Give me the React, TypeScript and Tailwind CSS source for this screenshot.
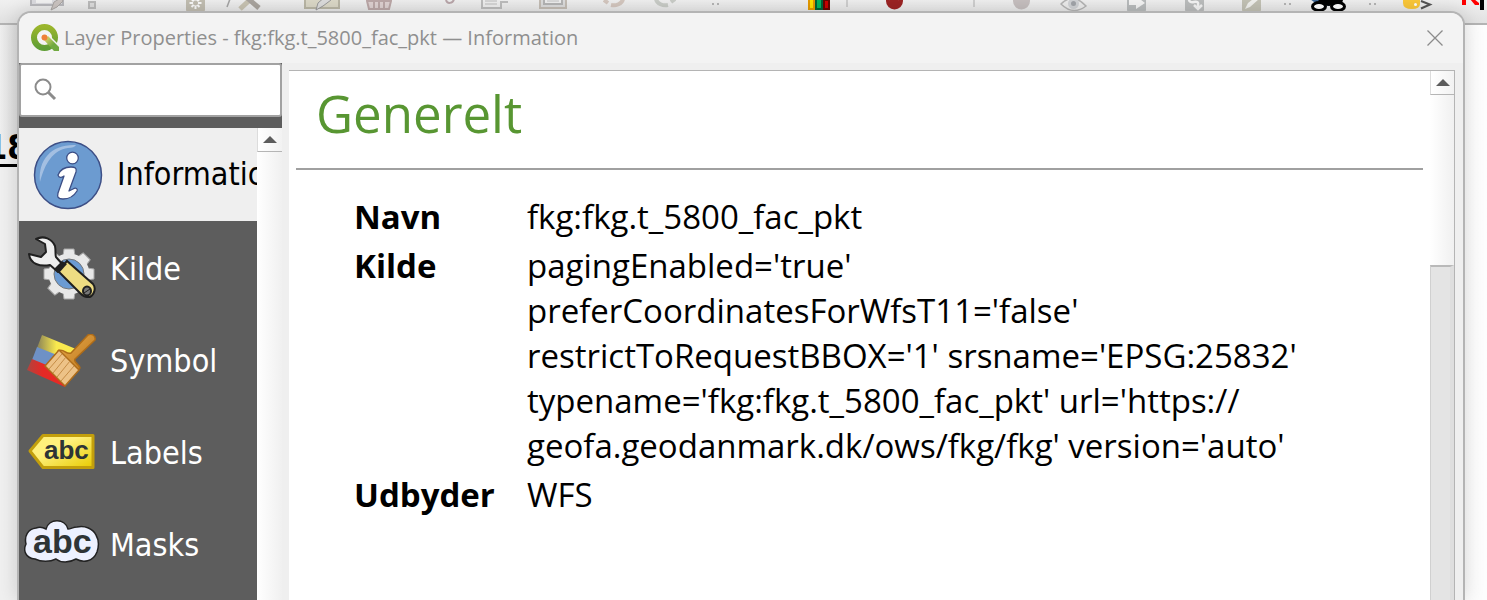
import React from "react";

type IconProps = { className?: string; w: number; children: React.ReactNode };

function ToolIcon({ className = "", w, children }: IconProps) {
  return (
    <svg className={`h-3 shrink-0 ${className}`} width={w} height={12} viewBox={`0 0 ${w} 12`} aria-hidden="true">
      {children}
    </svg>
  );
}

function Dots({ className = "" }: { className?: string }) {
  return (
    <ToolIcon w={8} className={className}>
      <path d="M0 3h2v2H0zM5 3h2v2H5z" fill="#b5b5b5" />
    </ToolIcon>
  );
}

function Toolbar() {
  return (
    <div className="flex h-[25px] items-start overflow-hidden border-b-2 border-[#b4b4b4] bg-linear-to-b from-[#f0f0f0] to-[#e2e2e2]">
      <ToolIcon w={34} className="ml-[30px]">
        <path d="M1-3v8h32v-8" fill="#dcdce0" stroke="#b9b9bd" strokeWidth="2" />
        <path d="M6-2h16v5H6z" fill="#f3f3f3" />
        <path d="M21 10l3-8 7-4 2 3-6 6z" fill="#ccc5c2" stroke="#aaa6a3" />
      </ToolIcon>
      <ToolIcon w={8} className="ml-6">
        <rect x="1" y="2" width="6" height="6" fill="#ddd" stroke="#bbb" strokeWidth="2" />
      </ToolIcon>
      <ToolIcon w={20} className="ml-[90px]">
        <rect x="0" y="-8" width="19" height="20" rx="2" fill="#c2beb2" />
        <path d="M9.500-3v12M3.500 3h12M5.500-1l8 8M13.500-1l-8 8" stroke="#fafafa" strokeWidth="2" />
        <circle cx="9.500" cy="3" r="2.500" fill="#c2beb2" />
      </ToolIcon>
      <ToolIcon w={36} className="ml-5">
        <path d="M4-1L1 7" stroke="#a5a5a5" strokeWidth="1.500" />
        <path d="M27-3L14 9" stroke="#c9c4b3" strokeWidth="5" />
        <path d="M19-4l14 12" stroke="#aaa59f" strokeWidth="5" />
      </ToolIcon>
      <ToolIcon w={36} className="ml-[42px]">
        <path d="M1-3V8h34V-3" fill="#dcd9c8" stroke="#bab7a6" strokeWidth="2" />
        <path d="M12 10l2-7 8-7 5 4-8 6z" fill="#ddd" stroke="#999" />
      </ToolIcon>
      <ToolIcon w={26} className="ml-[26px]">
        <path d="M1 1h24l-2 8H3z" fill="#dfd2d2" stroke="#bca8a8" strokeWidth="2" />
        <path d="M8 0v9M13 0v9M18 0v9" stroke="#bca8a8" strokeWidth="2" />
      </ToolIcon>
      <ToolIcon w={10} className="ml-[53px]">
        <path d="M1 0c1 4 7 4 8-1" fill="none" stroke="#b9a6aa" strokeWidth="2" />
      </ToolIcon>
      <ToolIcon w={28} className="ml-[26px]">
        <path d="M1-2v10h19V2h7" fill="#efefef" stroke="#bdbdbd" strokeWidth="2" />
        <path d="M4 1h12M4 4h12" stroke="#bdbdbd" />
      </ToolIcon>
      <ToolIcon w={28} className="ml-[30px]">
        <path d="M1-2V8h26V-2" fill="#ddd" stroke="#c4bdb5" strokeWidth="2" />
        <path d="M5-2v6h18v-6" fill="#efefef" stroke="#b5b5b5" strokeWidth="2" />
        <path d="M8 1h12" stroke="#c4c4c4" />
      </ToolIcon>
      <ToolIcon w={22} className="ml-9">
        <path d="M1 0l4 3M8 5c5 1 11-1 12-6" fill="none" stroke="#d4c7bf" strokeWidth="4" />
      </ToolIcon>
      <ToolIcon w={22} className="ml-[29px]">
        <path d="M2-1c1 5 7 7 12 6M17 2l4-3" fill="none" stroke="#c9ccc7" strokeWidth="4" />
      </ToolIcon>
      <Dots className="ml-9" />
      <ToolIcon w={22} className="ml-[88px]">
        <path d="M0-1h7v11H0z" fill="#e59a00" />
        <path d="M2-1h3v9H2z" fill="#ffe100" />
        <path d="M7-1h8v11H7z" fill="#006138" />
        <path d="M9-1h4v9H9z" fill="#00b560" />
        <path d="M15 0h7v10h-7z" fill="#650500" />
        <path d="M17 1h3v7h-3z" fill="#c00" />
      </ToolIcon>
      <ToolIcon w={3} className="ml-4">
        <path d="M0 0h2v7H0z" fill="#cfcfcf" />
      </ToolIcon>
      <ToolIcon w={17} className="ml-[37px]">
        <circle cx="8.500" cy="1" r="8.500" fill="#9c2424" />
        <path d="M3 0q5-4 10 0" stroke="#bd5555" fill="none" />
      </ToolIcon>
      <ToolIcon w={3} className="ml-[70px]">
        <path d="M0 0h2v7H0z" fill="#cfcfcf" />
      </ToolIcon>
      <ToolIcon w={17} className="ml-[37px]">
        <circle cx="8.500" cy="1" r="8.500" fill="#c6bfbf" />
      </ToolIcon>
      <ToolIcon w={28} className="ml-[30px]">
        <path d="M1 4q12-12 25 2-13 10-25-2z" fill="#ededed" stroke="#b5b5b5" strokeWidth="1.500" />
        <circle cx="13.500" cy="3.500" r="5.500" fill="#d1d3d6" />
        <circle cx="13.500" cy="3.500" r="2.500" fill="#a2a5aa" />
      </ToolIcon>
      <ToolIcon w={20} className="ml-[39px]">
        <rect x="0" y="-8" width="19" height="20" rx="2" fill="#b9bcbd" />
        <path d="M2 0h7v-4l9 7-9 6V5H2z" fill="#f5f5f5" />
      </ToolIcon>
      <ToolIcon w={20} className="ml-[38px]">
        <rect x="0" y="-8" width="19" height="20" rx="2" fill="#bbbdbd" />
        <path d="M4-1q0 4 5 3 5-1 4 3v3M9 5l4 4 4-4" fill="none" stroke="#f5f5f5" strokeWidth="2.500" />
      </ToolIcon>
      <ToolIcon w={20} className="ml-[37px]">
        <rect x="0" y="-8" width="19" height="20" rx="2" fill="#c3c2b5" />
        <path d="M3 9l3-6 9-7 2 3-9 8z" fill="#f2f2ef" />
      </ToolIcon>
      <Dots className="ml-[22px]" />
      <ToolIcon w={38} className="ml-[18px]">
        <path d="M0-1h10l10 7-12-1z" fill="#426b98" />
        <path d="M8 0h25l-2 6-7-1-5 1-6-1z" fill="#000" />
        <ellipse cx="9" cy="6.500" rx="6.500" ry="4" fill="#fff" stroke="#000" strokeWidth="3" />
        <ellipse cx="28" cy="6.500" rx="6.500" ry="4" fill="#fff" stroke="#000" strokeWidth="3" />
      </ToolIcon>
      <Dots className="ml-[21px]" />
      <ToolIcon w={30} className="ml-[26px]">
        <path d="M0-2h17v6q0 5-8 5-9 0-9-6z" fill="#fbc83a" />
        <circle cx="12.500" cy="4.500" r="1.500" fill="#fff" />
        <path d="M18 1l9 3.500-9 4" fill="none" stroke="#555" strokeWidth="2" />
      </ToolIcon>
      <ToolIcon w={24} className="ml-[29px]">
        <path d="M0-1h4v6H0zM8-1h4l5 4v2h-4z" fill="#f00" />
        <path d="M18 0h4v10h-4z" fill="#000" />
      </ToolIcon>
    </div>
  );
}

function QgisLogo() {
  return (
    <svg width="28" height="28" viewBox="0 0 28 28" className="shrink-0" aria-hidden="true">
      <defs>
        <linearGradient id="qring" x1="0" y1="0" x2="0" y2="1">
          <stop offset="0" stopColor="#9ab52c" />
          <stop offset="1" stopColor="#5f9e35" />
        </linearGradient>
        <linearGradient id="qtail" x1="0" y1="0" x2="1" y2="1">
          <stop offset="0" stopColor="#f1dc72" />
          <stop offset=".6" stopColor="#71aa40" />
        </linearGradient>
      </defs>
      <circle cx="13.500" cy="13.500" r="10.500" fill="none" stroke="url(#qring)" strokeWidth="6" />
      <path d="M17 13h3l8 8v2l-12-9z" fill="#f3f3f3" />
      <path d="M13 16l4-4 11 11v4h-5z" fill="url(#qtail)" />
      <circle cx="13.500" cy="13.500" r="3" fill="#ee8038" />
    </svg>
  );
}

function InfoIcon() {
  return (
    <svg width="70" height="70" viewBox="0 0 70 70" aria-hidden="true">
      <circle cx="35" cy="35" r="33.500" fill="#6c9bd0" stroke="#3d4f86" strokeWidth="1.500" />
      <path d="M7 42C5 19 19 4 43 5c-1 2-4 3-8 3C20 10 12 23 7 42z" fill="#a3bfe2" />
      <circle cx="39.500" cy="18" r="5.800" fill="#fff" stroke="#3d4f86" strokeWidth="1.300" />
      <path
        d="M25 35c1 3 3 3 6 1l-6 17c-1 4 0 6 5 6 6 0 11-3 14-8 1-2-1-4-4-2l-4 2 7-19c1-4-1-5-5-5-6 0-11 3-13 8z"
        fill="#fff"
        stroke="#3d4f86"
        strokeWidth="1.300"
        strokeLinejoin="round"
      />
    </svg>
  );
}

const teeth = [0, 45, 90, 135, 180, 225, 270, 315];

function SourceIcon() {
  return (
    <svg width="70" height="66" viewBox="0 0 70 66" aria-hidden="true">
      <g fill="#e8e8e8" stroke="#a7a7a7">
        {teeth.map((a) => (
          <path key={a} d="M36 20l1-7h10l1 7z" transform={`rotate(${a} 42 38)`} />
        ))}
      </g>
      <circle cx="42" cy="38" r="20.500" fill="#e8e8e8" />
      <circle cx="42" cy="38" r="15" fill="#6b9bd3" stroke="#777" />
      <path
        d="M9 3c8-4 16 0 19 7 1 5 0 8 1 11l8 9-6 6-8-7C13 31 3 28 2 18l12 3 5-5-1-8z"
        fill="#eee"
        stroke="#202020"
        strokeWidth="2"
        strokeLinejoin="round"
      />
      <path d="M31 35l9-10 26 23c4 5 0 14-6 13-3 0-5-2-7-4z" fill="#eedc82" stroke="#202020" strokeWidth="2" />
      <path d="M27 33l8-8 5 3-8 9z" fill="#202020" />
      <ellipse cx="60" cy="55" rx="4" ry="4.500" fill="#777" stroke="#202020" strokeWidth="2" />
      <path d="M57 57l6-4" stroke="#202020" />
    </svg>
  );
}

function SymbolIcon() {
  return (
    <svg width="70" height="54" viewBox="0 0 70 54" aria-hidden="true">
      <defs>
        <linearGradient id="yel" x1="0" x2="1">
          <stop offset="0" stopColor="#8b8356" />
          <stop offset=".5" stopColor="#f9e94e" />
        </linearGradient>
        <linearGradient id="red" x1="0" x2="1">
          <stop offset="0" stopColor="#b0443f" />
          <stop offset=".4" stopColor="#e62925" />
        </linearGradient>
        <linearGradient id="wood" x1="0" y1="0" x2="1" y2="1">
          <stop offset="0" stopColor="#e7a94c" />
          <stop offset="1" stopColor="#bd761a" />
        </linearGradient>
      </defs>
      <path d="M15 1l34 14-9 13-30-14z" fill="url(#yel)" />
      <path d="M10 13l35 14-8 13L5 26z" fill="#6e91c6" />
      <path d="M5 25l34 14-1 14L0 36z" fill="url(#red)" />
      <path
        d="M61 1c4-2 8 1 7 5L48 25c-2 3 4 5 5 9l-4 4-18-21c6-3 8 4 13 2z"
        fill="url(#wood)"
        stroke="#ae6c19"
        strokeWidth="1.500"
        strokeLinejoin="round"
      />
      <path d="M18 32l14-16 20 20-14 16z" fill="#edc287" stroke="#ae6c19" strokeWidth="1.500" />
      <path d="M22 35l13-15M26 39l13-16M30 43l13-16M34 47l13-15" stroke="#c58c46" />
    </svg>
  );
}

function LabelIcon() {
  return (
    <svg width="68" height="38" viewBox="0 0 68 38" aria-hidden="true">
      <defs>
        <linearGradient id="tag" x1="0" y1="0" x2="1" y2="1">
          <stop offset=".4" stopColor="#fff07c" />
          <stop offset="1" stopColor="#e8cb00" />
        </linearGradient>
      </defs>
      <path d="M2 17L15 1.500h50v32H15z" fill="url(#tag)" stroke="#c39f0c" strokeWidth="3" strokeLinejoin="round" />
      <text x="16" y="25" className="fill-[#2e3436] font-['Liberation_Sans'] text-[26px] font-bold">abc</text>
    </svg>
  );
}

function MaskIcon() {
  return (
    <svg width="76" height="50" viewBox="0 0 76 50" aria-hidden="true">
      <path
        d="M12 8q5-2 10 1c3-11 19-11 22 0 3 0 5-2 9-2 8-2 16 2 19 8 3 5 3 11 1 17-4 10-14 11-21 7-7 4-15 4-20 0-6 3-15 3-21 0C1 38-1 30 2 24 0 16 4 9 12 8z"
        fill="#edf1ff"
        stroke="#222"
        strokeWidth="1.500"
      />
      <text x="9" y="33" className="fill-[#2e3436] font-['Liberation_Sans'] text-[34px] font-bold">abc</text>
    </svg>
  );
}

const pages = [
  { name: "Kilde", icon: <SourceIcon /> },
  { name: "Symbol", icon: <SymbolIcon /> },
  { name: "Labels", icon: <LabelIcon /> },
  { name: "Masks", icon: <MaskIcon /> },
];

const rows = [
  { key: "Navn", value: "fkg:fkg.t_5800_fac_pkt" },
  {
    key: "Kilde",
    value:
      "pagingEnabled='true'\npreferCoordinatesForWfsT11='false'\nrestrictToRequestBBOX='1' srsname='EPSG:25832'\ntypename='fkg:fkg.t_5800_fac_pkt' url='https://\ngeofa.geodanmark.dk/ows/fkg/fkg' version='auto'",
  },
  { key: "Udbyder", value: "WFS" },
];

function ScrollUp() {
  return (
    <button
      aria-label="Scroll up"
      className="flex h-6 w-full shrink-0 items-center justify-center border-b border-l border-b-[#b5b5b5] border-l-[#dcdcdc] bg-linear-to-r from-white to-[#f2f2f2]"
    >
      <svg width="14" height="7" viewBox="0 0 14 7" aria-hidden="true">
        <path d="M0 7l7-7 7 7z" fill="#5c5c5c" />
      </svg>
    </button>
  );
}

function Sidebar() {
  return (
    <aside className="flex w-[263px] shrink-0 flex-col bg-[#5d5d5d]">
      <label className="flex h-[54px] shrink-0 items-center rounded-[3px] border-2 border-[#a2a2a2] bg-white pl-3">
        <svg width="24" height="24" viewBox="0 0 24 24" fill="none" stroke="#8b8b8b" strokeWidth="2" aria-hidden="true">
          <circle cx="10" cy="9" r="7.500" />
          <path d="M15 14l7 7" strokeWidth="3" />
        </svg>
        <input type="text" aria-label="Search" className="min-w-0 flex-1 px-2 text-[24px] outline-none" />
      </label>
      <div className="mt-[11px] flex min-h-0 flex-1">
        <nav className="min-w-0 flex-1 overflow-hidden font-['DejaVu_Sans_Condensed','Noto_Sans',sans-serif] text-[32px] leading-[45px]">
          <button className="mb-0.5 flex h-[93px] w-full items-center overflow-hidden bg-[#efefef] pl-[14px] text-left text-black">
            <span className="flex w-[84px] shrink-0">
              <InfoIcon />
            </span>
            <span className="shrink-0">Information</span>
          </button>
          {pages.map((p) => (
            <button key={p.name} className="flex h-[92px] w-full items-center pl-[5px] text-left text-white">
              <span className="flex w-[86px] shrink-0 justify-start">
                <span className="flex w-[76px] justify-center">{p.icon}</span>
              </span>
              <span>{p.name}</span>
            </button>
          ))}
        </nav>
        <div className="flex w-[25px] shrink-0 flex-col bg-linear-to-r from-white to-[#f0f0f0]">
          <ScrollUp />
        </div>
      </div>
    </aside>
  );
}

function Details() {
  return (
    <main className="mt-[7px] mr-2 ml-[7px] flex min-w-0 flex-1 border-t border-r border-[#b4b4b4] bg-white font-['Open_Sans',sans-serif] text-black">
      <div className="min-w-0 flex-1 pr-[7px] pl-[7px]">
        <h1 className="border-b-2 border-[#a0a0a0] pt-[7px] pb-5 pl-5 text-[51px] leading-[70px] font-normal text-[#589632]">
          Generelt
        </h1>
        <table className="mt-6 ml-[58px] text-[33px] leading-[45px]">
          <tbody>
            {rows.map((r) => (
              <tr key={r.key}>
                <th scope="row" className="w-[173px] pb-1 text-left align-top font-bold">
                  {r.key}
                </th>
                <td className="pb-1 align-top whitespace-pre">{r.value}</td>
              </tr>
            ))}
          </tbody>
        </table>
      </div>
      <div className="flex w-6 shrink-0 flex-col bg-linear-to-r from-white to-[#f0f0f0]">
        <ScrollUp />
        <div className="mt-[170px] flex-1 border-t-2 border-r-4 border-l border-t-[#b9b9b9] border-r-[#dedede] border-l-[#d0d0d0] bg-[#e4e4e4]" />
      </div>
    </main>
  );
}

export default function App() {
  return (
    <div className="relative h-screen overflow-hidden bg-linear-to-l from-[#fdfdfd] to-[#f0f0f0]">
      <div className="absolute inset-x-0 top-0">
        <Toolbar />
        <div className="h-[115px] w-[19px] bg-linear-to-r from-[#efefef] to-[#dcdcdc]" />
        <p className="absolute top-[130px] -left-[14px] border-b-[3px] border-black font-['DejaVu_Sans_Condensed','Noto_Sans',sans-serif] text-[34px] leading-[34px] font-bold text-black">
          18
        </p>
      </div>
      <section
        aria-label="Layer Properties"
        className="relative mr-[22px] ml-[17px] flex h-full flex-col pt-[11px]"
      >
        <div className="flex min-h-0 flex-1 flex-col overflow-hidden rounded-t-[14px] border-2 border-b-0 border-[#b4b4b4] bg-[#efefef] shadow-[0_0_20px_rgba(0,0,0,0.16)]">
          <header className="flex h-[50px] shrink-0 items-center bg-[#f3f3f3] pr-5 pl-3">
            <QgisLogo />
            <h2 className="ml-[5px] flex-1 font-['Open_Sans',sans-serif] text-[20px] leading-7 whitespace-nowrap text-[#8f8f8f]">
              Layer Properties - fkg:fkg.t_5800_fac_pkt — Information
            </h2>
            <button aria-label="Close" className="flex">
              <svg width="16" height="16" viewBox="0 0 16 16" stroke="#8b8b8b" strokeWidth="1.300" aria-hidden="true">
                <path d="M.5.500l15 15M15.500.500l-15 15" />
              </svg>
            </button>
          </header>
          <div className="flex min-h-0 flex-1">
            <Sidebar />
            <Details />
          </div>
        </div>
      </section>
    </div>
  );
}
